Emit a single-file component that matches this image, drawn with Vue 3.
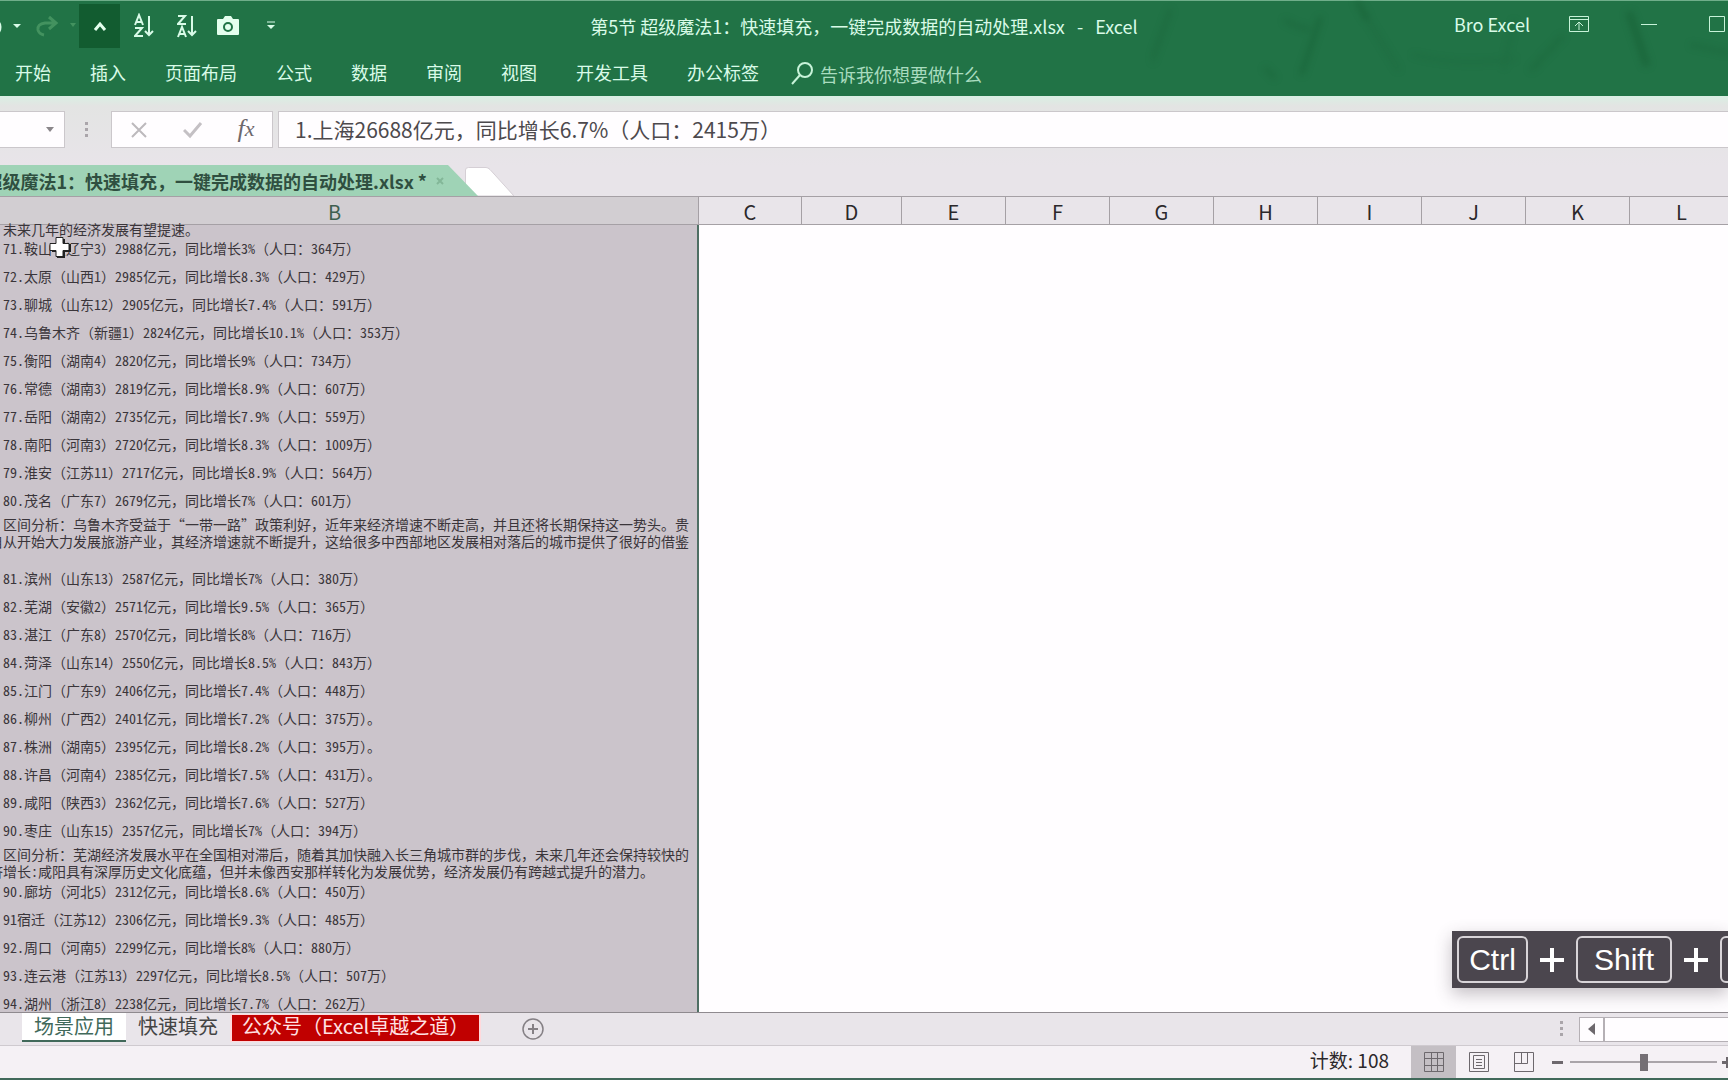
<script setup>
import { ref } from 'vue'

const tabs = ['开始', '插入', '页面布局', '公式', '数据', '审阅', '视图', '开发工具', '办公标签']
const columns = ['C', 'D', 'E', 'F', 'G', 'H', 'I', 'J', 'K', 'L']
const formula = ref('1.上海26688亿元，同比增长6.7%（人口：2415万）')
const zoom = ref(50)

const rows = [
  { kind: 'clipped', text: '未来几年的经济发展有望提速。' },
  { text: '71.鞍山（辽宁3）2988亿元，同比增长3%（人口：364万）' },
  { text: '72.太原（山西1）2985亿元，同比增长8.3%（人口：429万）' },
  { text: '73.聊城（山东12）2905亿元，同比增长7.4%（人口：591万）' },
  { text: '74.乌鲁木齐（新疆1）2824亿元，同比增长10.1%（人口：353万）' },
  { text: '75.衡阳（湖南4）2820亿元，同比增长9%（人口：734万）' },
  { text: '76.常德（湖南3）2819亿元，同比增长8.9%（人口：607万）' },
  { text: '77.岳阳（湖南2）2735亿元，同比增长7.9%（人口：559万）' },
  { text: '78.南阳（河南3）2720亿元，同比增长8.3%（人口：1009万）' },
  { text: '79.淮安（江苏11）2717亿元，同比增长8.9%（人口：564万）' },
  { text: '80.茂名（广东7）2679亿元，同比增长7%（人口：601万）' },
  {
    kind: 'tall',
    text: '区间分析：乌鲁木齐受益于“一带一路”政策利好，近年来经济增速不断走高，并且还将长期保持这一势头。贵\n自从开始大力发展旅游产业，其经济增速就不断提升，这给很多中西部地区发展相对落后的城市提供了很好的借鉴',
  },
  { text: '81.滨州（山东13）2587亿元，同比增长7%（人口：380万）' },
  { text: '82.芜湖（安徽2）2571亿元，同比增长9.5%（人口：365万）' },
  { text: '83.湛江（广东8）2570亿元，同比增长8%（人口：716万）' },
  { text: '84.菏泽（山东14）2550亿元，同比增长8.5%（人口：843万）' },
  { text: '85.江门（广东9）2406亿元，同比增长7.4%（人口：448万）' },
  { text: '86.柳州（广西2）2401亿元，同比增长7.2%（人口：375万）。' },
  { text: '87.株洲（湖南5）2395亿元，同比增长8.2%（人口：395万）。' },
  { text: '88.许昌（河南4）2385亿元，同比增长7.5%（人口：431万）。' },
  { text: '89.咸阳（陕西3）2362亿元，同比增长7.6%（人口：527万）' },
  { text: '90.枣庄（山东15）2357亿元，同比增长7%（人口：394万）' },
  {
    kind: 'double',
    text: '区间分析：芜湖经济发展水平在全国相对滞后，随着其加快融入长三角城市群的步伐，未来几年还会保持较快的\n济增长:咸阳具有深厚历史文化底蕴，但并未像西安那样转化为发展优势，经济发展仍有跨越式提升的潜力。',
  },
  { text: '90.廊坊（河北5）2312亿元，同比增长8.6%（人口：450万）' },
  { text: '91宿迁（江苏12）2306亿元，同比增长9.3%（人口：485万）' },
  { text: '92.周口（河南5）2299亿元，同比增长8%（人口：880万）' },
  { text: '93.连云港（江苏13）2297亿元，同比增长8.5%（人口：507万）' },
  { text: '94.湖州（浙江8）2238亿元，同比增长7.7%（人口：262万）' },
]
</script>

<template>
  <div class="app">
    <header class="ribbon">
      <svg class="pattern" width="576" height="96" viewBox="0 0 576 96" aria-hidden="true">
        <g fill="none" stroke="#14592f" stroke-linecap="round">
          <path d="M18 10 0 60" stroke-width="5" opacity=".25" />
          <path d="M168 18 150 72" stroke-width="5" opacity=".4" />
          <path d="M134 20q10 6 22 8M114 68l8 8" stroke-width="5" opacity=".25" />
          <path d="M206 2l8 14" stroke-width="6" opacity=".4" />
          <path d="M214 16l32 52" stroke-width="5" opacity=".15" />
          <path d="M262 54q50 12 100 4M362 20l-10 46" stroke-width="4" opacity=".15" />
          <path d="M410 36l-30 32" stroke-width="6" opacity=".2" />
          <path d="M478 14l16 48" stroke-width="8" opacity=".4" />
          <path d="M540 44l36 8" stroke-width="4" opacity=".25" />
        </g>
      </svg>

      <div class="titlebar">
        <div class="quick">
          <button class="tool undo" aria-label="撤销">
            <svg width="24" height="24" viewBox="0 0 24 24"><path d="M-8 8Q0 6 0 13t-6 6" fill="none" stroke="#d9fbe8" stroke-width="3" /><path d="M13 10h8l-4 4z" fill="#d9fbe8" /></svg>
          </button>
          <button class="tool redo" aria-label="恢复">
            <svg width="44" height="24" viewBox="0 0 44 24"><path d="M15 3l7 6-7 6M21 9H11q-8 1-7 7 1 4 6 5" fill="none" stroke="#43925f" stroke-width="3" /><path d="M36 9h6l-3 4z" fill="#43925f" /></svg>
          </button>
          <button class="tool up" aria-label="上移">
            <svg width="14" height="12" viewBox="0 0 14 12"><path d="M2 10l5-6 5 6" fill="none" stroke="#e4ffee" stroke-width="3" /></svg>
          </button>
          <button class="tool sort" aria-label="升序">
            <svg width="20" height="26" viewBox="0 0 20 26" fill="none" stroke="#d9fbe8" stroke-width="2"><path d="M1 12 5 2l4 10M2 9h6M1 15h7L1 23h8M15 3v19M11 18l4 4 4-4" /></svg>
          </button>
          <button class="tool sort" aria-label="降序">
            <svg width="20" height="26" viewBox="0 0 20 26" fill="none" stroke="#d9fbe8" stroke-width="2"><path d="M1 3h7L1 11h8M1 24l4-10 4 10M2 21h6M15 3v19M11 18l4 4 4-4" /></svg>
          </button>
          <button class="tool camera" aria-label="照相机">
            <svg width="24" height="20" viewBox="0 0 24 20"><path d="M2 3h5l2-3h6l2 3h5q1 0 1 1v14q0 1-1 1H2q-1 0-1-1V4q0-1 1-1z" fill="#e4ffee" /><circle cx="12" cy="11" r="4" fill="#e4ffee" stroke="#217346" stroke-width="2" /></svg>
          </button>
          <button class="tool more" aria-label="自定义快速访问工具栏">
            <svg width="8" height="10" viewBox="0 0 8 10"><path d="M0 1h8" stroke="#d9fbe8" stroke-width="1" /><path d="M0 4h8L4 8z" fill="#d9fbe8" /></svg>
          </button>
        </div>
        <h1 class="title">第5节 超级魔法1：快速填充，一键完成数据的自动处理.xlsx&nbsp;&nbsp;&nbsp;-&nbsp;&nbsp;&nbsp;Excel</h1>
        <div class="window">
          <span class="user">Bro Excel</span>
          <button class="tool" aria-label="功能区显示选项">
            <svg width="20" height="17" viewBox="0 0 20 17" fill="none" stroke="#c8f3d9"><path d="M.5.5h19v15H.5zM.5 3.500h19M10 14V7M6 10l4-4 4 4" /></svg>
          </button>
          <button class="tool" aria-label="最小化">
            <svg width="16" height="17" viewBox="0 0 16 17"><path d="M0 8.500h16" stroke="#c8f3d9" /></svg>
          </button>
          <button class="tool" aria-label="最大化">
            <svg width="16" height="17" viewBox="0 0 16 17"><path d="M.5.5h15v15H.5z" fill="none" stroke="#c8f3d9" /></svg>
          </button>
        </div>
      </div>

      <nav class="menu">
        <a v-for="tab in tabs" :key="tab" href="#">{{ tab }}</a>
        <button class="tell">
          <svg width="22" height="24" viewBox="0 0 22 24" fill="none" stroke="#c8f3d9" stroke-width="2"><circle cx="14" cy="8" r="7" /><path d="M9 13 1 22" /></svg>
          <span>告诉我你想要做什么</span>
        </button>
      </nav>
    </header>

    <div class="formula-bar">
      <div class="namebox">
        <button class="tool" aria-label="名称框">
          <svg width="8" height="5" viewBox="0 0 8 5"><path d="M0 0h8L4 5z" fill="#8a868a" /></svg>
        </button>
      </div>
      <svg class="dots" width="4" height="16" viewBox="0 0 4 16" fill="#aaa5aa"><path d="M0 0h3v3H0zM0 6h3v3H0zM0 12h3v3H0z" /></svg>
      <div class="actions">
        <button class="tool" aria-label="取消"><svg width="18" height="18" viewBox="0 0 18 18"><path d="M2 2l14 14M16 2 2 16" stroke="#bdb9bd" stroke-width="2" /></svg></button>
        <button class="tool" aria-label="输入"><svg width="20" height="18" viewBox="0 0 20 18"><path d="M1 9l6 6L18 2" fill="none" stroke="#c4c0c4" stroke-width="3" /></svg></button>
        <button class="tool fx" aria-label="插入函数">f<sub>x</sub></button>
      </div>
      <input v-model="formula" class="formula" aria-label="编辑栏" />
    </div>

    <div class="doc-tabs">
      <button class="doc-tab"><span>超级魔法1：快速填充，一键完成数据的自动处理.xlsx *</span>
        <svg width="8" height="8" viewBox="0 0 8 8"><path d="M1 1l6 6M7 1 1 7" stroke="#83b798" stroke-width="2" /></svg>
      </button>
      <button class="new-tab" aria-label="新建文档">
        <svg width="52" height="29" viewBox="0 0 52 29"><path d="M1.500 29V3q0-2.500 3-2.500H22q2 0 4 2L50 29z" fill="#fff" stroke="#d5cfd5" /></svg>
      </button>
    </div>

    <main class="sheet">
      <table>
        <colgroup>
          <col class="wide" />
          <col v-for="c in columns" :key="c" :class="'col-' + c" />
        </colgroup>
        <thead>
          <tr>
            <th class="selected" scope="col">B</th>
            <th v-for="c in columns" :key="c" scope="col">{{ c }}</th>
          </tr>
        </thead>
        <tbody>
          <tr v-for="(row, i) in rows" :key="i" :class="row.kind">
            <td class="cell"><div>{{ row.text }}</div></td>
            <td :colspan="columns.length"></td>
          </tr>
        </tbody>
      </table>
      <svg class="cursor" width="22" height="22" viewBox="0 0 22 22"><path d="M8 3h8v5h6v8h-6v6H8v-6H3V9h5z" fill="#222" /><path d="M7 1.500h7v6h6v7h-6v6H7v-6H1v-7h6z" fill="#fff" stroke="#222" /></svg>
      <div class="keys">
        <kbd>Ctrl</kbd>
        <svg width="26" height="26" viewBox="0 0 26 26"><path d="M13 1v24M1 13h24" stroke="#fff" stroke-width="4" /></svg>
        <kbd>Shift</kbd>
        <svg width="26" height="26" viewBox="0 0 26 26"><path d="M13 1v24M1 13h24" stroke="#fff" stroke-width="4" /></svg>
        <kbd class="last"></kbd>
      </div>
    </main>

    <div class="sheet-bar">
      <button class="sheet-tab active">场景应用</button>
      <button class="sheet-tab">快速填充</button>
      <button class="sheet-tab red">公众号（Excel卓越之道）</button>
      <button class="tool add" aria-label="新工作表">
        <svg width="24" height="24" viewBox="0 0 24 24" fill="none" stroke="#858085" stroke-width="2"><circle cx="12" cy="12" r="10" stroke-width="1.500" /><path d="M12 7v10M7 12h10" /></svg>
      </button>
      <div class="hscroll">
        <svg width="4" height="16" viewBox="0 0 4 16" fill="#aaa5aa"><path d="M0 0h3v3H0zM0 6h3v3H0zM0 12h3v3H0z" /></svg>
        <button class="arrow" aria-label="向左滚动"><svg width="7" height="12" viewBox="0 0 7 12"><path d="M7 0v12L0 6z" fill="#6d686d" /></svg></button>
        <div class="track"></div>
      </div>
    </div>

    <footer class="status">
      <span class="count">计数: 108</span>
      <button class="view on" aria-label="普通"><svg width="20" height="20" viewBox="0 0 20 20" fill="none" stroke="#6d686d"><path d="M.5.5h19v19H.5zM7.500.5v19M13.500.5v19M.5 6.500h19M.5 13.500h19" /></svg></button>
      <button class="view" aria-label="页面布局"><svg width="20" height="20" viewBox="0 0 20 20" fill="none" stroke="#6d686d"><path d="M.5.5h19v19H.5zM4.500 3.500h11v13h-11zM7 7.500h6M7 10.500h6M7 13.500h6" /></svg></button>
      <button class="view" aria-label="分页预览"><svg width="20" height="20" viewBox="0 0 20 20" fill="none" stroke="#6d686d"><path d="M.5.5h19v19H.5zM.5 11.500h13V.5M7.500.5v11" /></svg></button>
      <button class="tool minus" aria-label="缩小"><svg width="11" height="3" viewBox="0 0 11 3"><path d="M0 0h11v3H0z" fill="#6d686d" /></svg></button>
      <input v-model="zoom" class="zoom" type="range" min="0" max="100" aria-label="显示比例" />
      <button class="tool plus" aria-label="放大"><svg width="11" height="11" viewBox="0 0 11 11"><path d="M0 4h4V0h3v4h4v3H7v4H4V7H0z" fill="#6d686d" /></svg></button>
    </footer>
  </div>
</template>

<style>
body {
  margin: 0;
  overflow: hidden;
}
</style>

<style scoped>
.app {
  display: flex;
  flex-direction: column;
  height: 100vh;
  overflow: hidden;
  background: #e8e4e9;
  font-family: "Noto Sans CJK SC", sans-serif;
  font-size: 18px;
  color: #444;
}
button {
  padding: 0;
  border: 0;
  background: none;
  font: inherit;
  color: inherit;
}
button svg {
  display: block;
  flex: none;
}
.tool {
  display: flex;
  align-items: center;
  justify-content: center;
  flex: none;
}
.ribbon {
  position: relative;
  flex: none;
  height: 95px;
  border-top: 1px solid #6fae8a;
  background: #217346;
  color: #d9fbe8;
}
.pattern {
  position: absolute;
  top: 0;
  right: 0;
  filter: blur(3px);
}
.titlebar {
  position: relative;
  display: grid;
  grid-template-columns: 1fr auto 1fr;
  height: 50px;
}
.quick {
  display: flex;
  align-items: center;
  height: 50px;
}
.undo {
  width: 32px;
  justify-content: flex-start;
}
.redo {
  width: 47px;
}
.up {
  width: 41px;
  height: 44px;
  background: #125c30;
}
.sort {
  width: 43px;
}
.sort:nth-child(4) {
  margin-left: 2px;
}
.camera {
  width: 44px;
  margin-left: -2px;
}
.more {
  width: 42px;
}
.title {
  margin: 0;
  font-size: 18px;
  font-weight: 400;
  line-height: 50px;
  white-space: pre;
}
.window {
  display: flex;
  align-items: center;
  justify-content: flex-end;
  height: 46px;
  padding-right: 3px;
}
.user {
  margin-right: 39px;
}
.window .tool + .tool {
  margin-left: 52px;
}
.menu {
  position: relative;
  display: flex;
  gap: 39px;
  height: 45px;
  padding-left: 15px;
  line-height: 42px;
}
.menu a {
  color: inherit;
  text-decoration: none;
}
.tell {
  display: flex;
  align-items: center;
  gap: 7px;
  height: 45px;
  margin-left: -7px;
  color: #a9dcbf;
}
.formula-bar {
  display: flex;
  flex: none;
  align-items: center;
  height: 37px;
  padding: 15px 0 17px;
  background: linear-gradient(#d9efe3, #e3e4e3 10px, #e8e4e9);
}
.namebox,
.actions,
.formula {
  box-sizing: border-box;
  height: 37px;
  border: 1px solid #cbc7cb;
  background: #fffdff;
}
.namebox {
  display: flex;
  align-items: center;
  justify-content: flex-end;
  width: 65px;
  padding-right: 10px;
  border-left: 0;
}
.dots {
  margin: 0 22px 0 20px;
}
.actions {
  display: flex;
  justify-content: space-around;
  width: 162px;
  margin-right: 5px;
}
.fx {
  padding-bottom: 2px;
  font: italic 26px "Liberation Serif", serif;
  color: #6d686d;
}
.fx sub {
  font-size: 22px;
  line-height: 22px;
}
.formula {
  flex: 1;
  min-width: 0;
  padding: 0 16px 2px;
  border-right: 0;
  border-radius: 0;
  font: 21px "Noto Sans CJK SC", sans-serif;
  color: #4d494d;
  outline: 0;
}
.doc-tabs {
  display: flex;
  flex: none;
  align-items: flex-end;
  height: 31px;
}
.doc-tab {
  display: flex;
  align-items: center;
  justify-content: flex-end;
  gap: 9px;
  box-sizing: border-box;
  width: 478px;
  height: 31px;
  padding-right: 34px;
  overflow: hidden;
  background: #9fd3b6;
  clip-path: polygon(0 0, 448px 0, 100% 100%, 0 100%);
  font-weight: 700;
  color: #2f4f40;
  white-space: nowrap;
}
.new-tab {
  margin-left: -14px;
}
.sheet {
  position: relative;
  flex: 1;
  min-height: 0;
  overflow: hidden;
  background: #fffdff;
}
table {
  width: max-content;
  margin-left: -29px;
  border-collapse: separate;
  border-spacing: 0;
  table-layout: fixed;
}
col {
  width: 104px;
}
.wide {
  width: 728px;
}
.col-C {
  width: 103px;
}
.col-D {
  width: 100px;
}
th {
  box-sizing: border-box;
  height: 29px;
  padding: 2px 0 0;
  border: solid #a5a0a5;
  border-width: 1px 1px 1px 0;
  background: #e9e5ea;
  font-size: 20px;
  font-weight: 400;
  line-height: 25px;
  color: #2b282b;
}
th.selected {
  background: #d2ced2;
  color: #3f5f50;
}
td {
  padding: 0;
}
.cell {
  box-sizing: border-box;
  height: 28px;
  padding: 0 0 3px 18px;
  border-right: 2px solid #4f6f64;
  background: #cbc4cb;
  font-family: "Noto Sans Mono CJK SC", "Noto Sans CJK SC", monospace;
  font-size: 14px;
  line-height: 17px;
  color: #3a353a;
  text-indent: 14px;
  white-space: pre;
}
.cell div {
  width: 700px;
}
.clipped .cell {
  height: 11px;
  padding-bottom: 0;
}
.clipped .cell div {
  height: 11px;
  line-height: 9px;
}
.tall .cell {
  height: 50px;
  vertical-align: top;
}
.double .cell {
  height: 33px;
  padding-bottom: 0;
  vertical-align: top;
}
.double .cell div {
  height: 33px;
}
.cursor {
  position: absolute;
  top: 40px;
  left: 49px;
}
.keys {
  position: absolute;
  right: 0;
  bottom: 24px;
  display: flex;
  align-items: center;
  gap: 11px;
  box-sizing: border-box;
  width: 276px;
  height: 57px;
  padding-left: 5px;
  overflow: hidden;
  background: #4b464e;
  box-shadow: 0 6px 16px rgba(60, 50, 60, 0.3);
  color: #fff;
}
.keys svg {
  flex: none;
}
kbd {
  flex: none;
  box-sizing: border-box;
  width: 96px;
  height: 47px;
  border: 2px solid #d8d4d8;
  border-radius: 6px;
  font: 30px/43px "Liberation Sans", sans-serif;
  text-align: center;
}
kbd:first-child {
  width: 71px;
}
.sheet-bar {
  display: flex;
  flex: none;
  box-sizing: border-box;
  height: 34px;
  border-top: 1px solid #8f8a8f;
  border-bottom: 1px solid #cfcacf;
  padding-left: 22px;
  background: #e9e5ea;
}
.sheet-tab {
  box-sizing: border-box;
  height: 29px;
  padding: 0 12px 4px;
  font-size: 20px;
  line-height: 23px;
}
.active {
  padding-bottom: 2px;
  border-bottom: 2px solid #41695a;
  background: #fff;
  color: #41695a;
}
.red {
  height: 28px;
  margin-top: 1px;
  padding: 0 10px 4px;
  border: solid #ffd9dc;
  border-width: 1px 2px;
  background: #c00000;
  line-height: 20px;
  color: #ffe1e3;
}
.add {
  height: 32px;
  margin-left: 40px;
}
.hscroll {
  display: flex;
  align-items: center;
  width: 168px;
  margin-left: auto;
}
.arrow,
.track {
  box-sizing: border-box;
  height: 25px;
  border: 1px solid #b5b0b5;
  background: #fffdff;
}
.arrow {
  display: flex;
  align-items: center;
  justify-content: center;
  width: 25px;
  margin-left: 15px;
}
.track {
  flex: 1;
  border-right: 0;
}
.status {
  display: flex;
  flex: none;
  align-items: center;
  justify-content: flex-end;
  box-sizing: border-box;
  height: 34px;
  overflow: hidden;
  border-bottom: 2px solid #41695a;
  background: #f5f1f5;
}
.count {
  padding: 0 22px 5px 0;
  font-size: 19px;
  color: #2b282b;
}
.view {
  display: flex;
  flex: none;
  align-items: center;
  justify-content: center;
  width: 45px;
  height: 32px;
}
.on {
  background: #c4bfc4;
}
.minus {
  margin-left: 6px;
}
.zoom {
  width: 147px;
  height: 18px;
  margin: 0 5px 0 7px;
  appearance: none;
  background: linear-gradient(#aaa5aa, #aaa5aa) center / 100% 2px no-repeat;
}
.zoom::-webkit-slider-thumb {
  appearance: none;
  width: 8px;
  height: 17px;
  background: #757075;
}
.plus {
  width: 6px;
  overflow: hidden;
  justify-content: flex-start;
}
</style>
